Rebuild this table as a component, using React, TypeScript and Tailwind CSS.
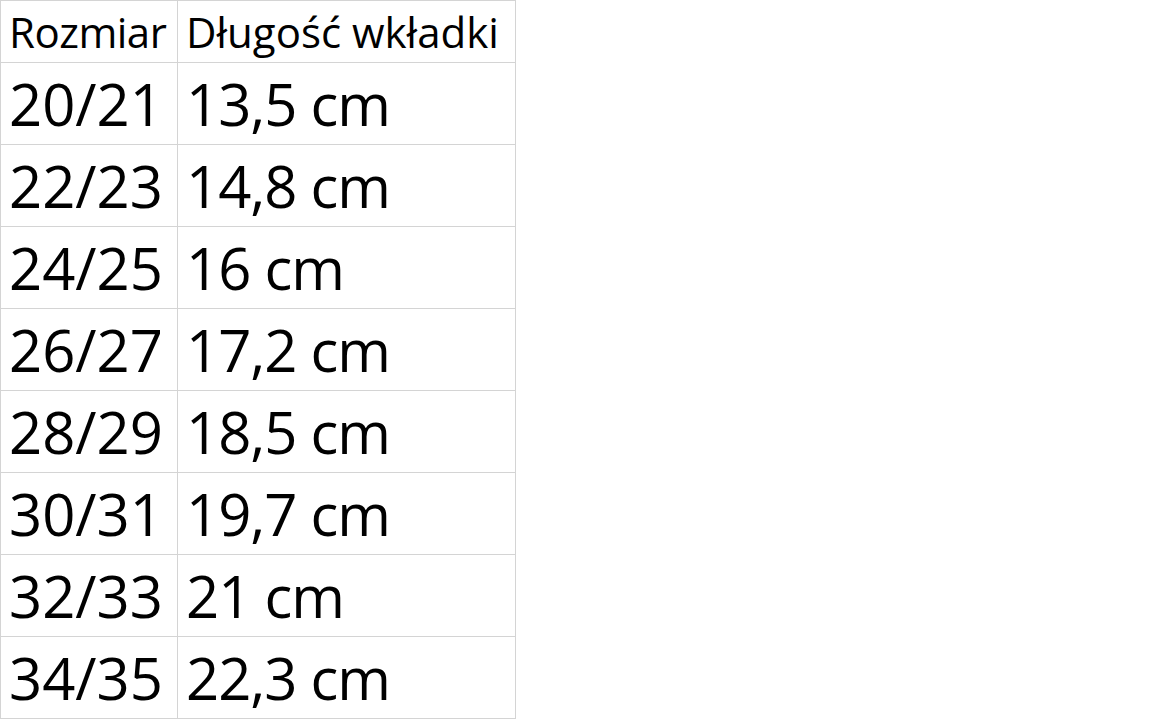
const rows: [string, string][] = [
  ["20/21", "13,5 cm"],
  ["22/23", "14,8 cm"],
  ["24/25", "16 cm"],
  ["26/27", "17,2 cm"],
  ["28/29", "18,5 cm"],
  ["30/31", "19,7 cm"],
  ["32/33", "21 cm"],
  ["34/35", "22,3 cm"],
];

export default function App() {
  return (
    <div className="w-[1152px] h-[719px] bg-white overflow-hidden text-black font-['Open_Sans',sans-serif]">
      <table className="border-collapse">
        <tbody>
          <tr className="h-[62px]">
            <td className="w-[177px] border border-[#d4d4d4] pl-[8px] text-[42px] leading-none align-middle whitespace-nowrap tracking-[-0.5px]">
              Rozmiar
            </td>
            <td className="w-[338px] border border-[#d4d4d4] pl-[8px] text-[42px] leading-none align-middle whitespace-nowrap">
              Długość wkładki
            </td>
          </tr>
          {rows.map(([size, length]) => (
            <tr key={size} className="h-[82px]">
              <td className="border border-[#d4d4d4] pl-[8px] text-[58px] leading-none align-middle whitespace-nowrap">
                {size}
              </td>
              <td className="border border-[#d4d4d4] pl-[8px] text-[58px] leading-none align-middle whitespace-nowrap tracking-[-1px]">
                {length}
              </td>
            </tr>
          ))}
        </tbody>
      </table>
    </div>
  );
}
